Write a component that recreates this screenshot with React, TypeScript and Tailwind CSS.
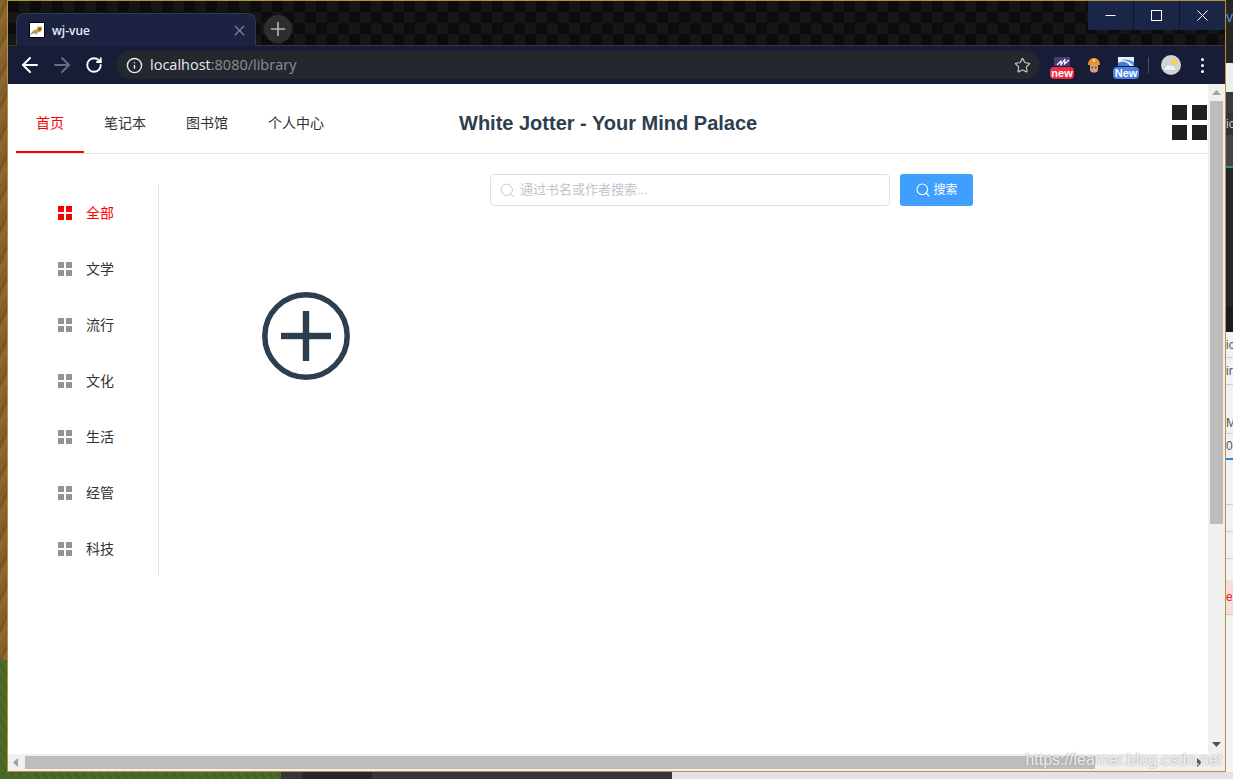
import React from "react";
import { ArrowLeft, ArrowRight, RotateCw, Info, Star, X, Plus, Search } from "lucide-react";

const cats = ["全部", "文学", "流行", "文化", "生活", "经管", "科技"];
const navs = ["首页", "笔记本", "图书馆", "个人中心"];

function Grid({ active }: { active: boolean }) {
  const c = active ? "bg-[#ff0000]" : "bg-[#909399]";
  return (
    <div className="grid grid-cols-[6px_6px] grid-rows-[6px_6px] gap-[2px]">
      <span className={c} />
      <span className={c} />
      <span className={c} />
      <span className={c} />
    </div>
  );
}

function Tomcat() {
  return (
    <svg width="16" height="16" viewBox="0 0 16 16" className="border border-black bg-white">
      <path d="M1 12 C3 8 6 7 8 7 L9 3 L10 4.5 L12 4.5 L13 3 L13.5 7.5 L12 10 L9 11 L5 11 Z" fill="#c79a3c" />
      <path d="M1 13 C3.5 10.5 6 10.5 8 13" stroke="#8a8a7a" strokeWidth="1.4" fill="none" />
      <path d="M9.5 5 L13 5 L13 7.5 L11 9 L9.5 7.5 Z" fill="#7d5f26" />
    </svg>
  );
}

function Mushroom() {
  return (
    <svg width="14" height="16" viewBox="0 0 14 16">
      <path d="M1 8 C1 3 4 1 7 1 C10 1 13 3 13 8 Z" fill="#e9932d" />
      <circle cx="7" cy="3.5" r="1.2" fill="#f7d9a8" />
      <path d="M3 8 H11 V13 C11 15 9 15.5 7 15.5 C5 15.5 3 15 3 13 Z" fill="#d9a07a" />
      <circle cx="5.2" cy="10.5" r="1.1" fill="#555" />
      <circle cx="8.8" cy="10.5" r="1.1" fill="#555" />
    </svg>
  );
}

function Weather() {
  return (
    <div className="flex h-5 w-5 items-center justify-center rounded-full bg-[#d3d3d3]">
      <svg width="16" height="14" viewBox="0 0 16 14">
        <circle cx="11" cy="4" r="3.2" fill="#f2d15c" />
        <path d="M2.5 12.5 C0 12.5 0 9 2.8 9 C3 6.5 7 5.5 8.5 8 C11 7.2 13 9 12.5 10.5 C14 11.5 13 12.5 12 12.5 Z" fill="#eaf3fa" stroke="#9dc2dc" strokeWidth="0.6" />
      </svg>
    </div>
  );
}

function PurpleExt() {
  return (
    <svg width="16" height="9" viewBox="0 0 16 9" className="bg-[#4a3a7c]">
      <path d="M3 8 L7 4 L7 8 L11 2 L10.5 7 L15 3" stroke="#ffffff" strokeWidth="1.2" fill="none" />
    </svg>
  );
}

function BlueExt() {
  return (
    <svg width="16" height="9" viewBox="0 0 16 9" className="bg-[#e8f0fb]">
      <path d="M0 6 C4 4 9 4 12 9 H0 Z" fill="#3f7fd8" />
      <path d="M3 3 C8 1.5 13 3 16 5 V9 H15 C13 5 8 3.5 3 3 Z" fill="#3f7fd8" opacity="0.8" />
    </svg>
  );
}

function Row({ h, text, red }: { h: string; text?: string; red?: boolean }) {
  return (
    <div className={h + " flex items-center overflow-hidden whitespace-nowrap border-b border-[#cccccc] text-xs " + (red ? "bg-[#f6dede] text-[#e02020]" : "text-[#555555]")}>
      {text}
    </div>
  );
}

export default function App() {
  return (
    <div className="relative flex h-[779px] w-[1233px] flex-col overflow-hidden bg-[#e6e6e6] [font-family:'Liberation_Sans','Noto_Sans_CJK_SC',sans-serif]">
      <div className="flex h-[772px]">
        {/* desktop, left */}
        <div className="flex h-full w-[7px] flex-col">
          <div className="h-[660px] bg-[repeating-linear-gradient(115deg,#84602a_0_5px,#795724_5px_8px,#8c6830_8px_13px)]" />
          <div className="flex-1 bg-[repeating-linear-gradient(60deg,#4c6b2a_0_4px,#466426_4px_7px)]" />
        </div>

        {/* browser window */}
        <div className="flex h-full w-[1219px] flex-col border border-[#bf8f35]">
          {/* tab strip */}
          <div className="flex h-[45px] items-end border-b border-[#35353a] bg-[#111111] bg-[repeating-conic-gradient(#161616_0_25%,#0c0c0c_0_50%)] bg-[length:22px_22px] pl-2">
            <div className="mb-[-1px] flex h-[33px] w-[240px] items-center rounded-t-lg border border-b-0 border-[#333848] bg-[#1b2242] pl-[12px] pr-[7px]">
              <Tomcat />
              <span className="ml-[7px] flex-1 pt-[1px] text-xs font-semibold text-[#e8ebf4] [font-family:'Open_Sans',sans-serif]">wj-vue</span>
              <X size={17} strokeWidth={1.8} className="text-[#84878f]" />
            </div>
            <div className="mb-[2px] ml-2 flex h-7 w-7 items-center justify-center rounded-full bg-[#2e2e2e]">
              <Plus size={22} strokeWidth={1.8} className="text-[#b4b4b4]" />
            </div>
            <div className="flex-1 self-stretch" />
            <div className="flex h-[29px] w-[137px] self-start bg-[#1a2647]">
              <div className="flex flex-1 items-center justify-center border-r border-[#0e1424]">
                <svg width="11" height="11" viewBox="0 0 11 11"><path d="M0.5 5.5 H10.5" stroke="#ffffff" strokeWidth="1" /></svg>
              </div>
              <div className="flex flex-1 items-center justify-center border-r border-[#0e1424]">
                <svg width="11" height="11" viewBox="0 0 11 11"><rect x="0.5" y="0.5" width="10" height="10" fill="none" stroke="#ffffff" strokeWidth="1" /></svg>
              </div>
              <div className="flex flex-1 items-center justify-center">
                <svg width="11" height="11" viewBox="0 0 11 11"><path d="M0.5 0.5 L10.5 10.5 M10.5 0.5 L0.5 10.5" stroke="#ffffff" strokeWidth="1" /></svg>
              </div>
            </div>
          </div>

          {/* toolbar */}
          <div className="flex h-[38px] items-center bg-[#171d36] pl-[10px] pr-[11px]">
            <ArrowLeft size={24} strokeWidth={2} className="text-white" />
            <ArrowRight size={24} strokeWidth={2} className="ml-[8px] text-[#686c7c]" />
            <RotateCw size={18} strokeWidth={2.4} className="ml-[11px] text-white" />
            <div className="ml-[13px] flex h-7 w-[924px] items-center rounded-full bg-[#23282e] pl-[10px] pr-[9px]">
              <Info size={17} strokeWidth={2} className="text-[#e6e6e6]" />
              <span className="ml-[7px] flex-1 text-[14.5px] text-[#e8eaed] [font-family:'Open_Sans',sans-serif]">
                localhost<span className="text-[#8c9095]">:8080/library</span>
              </span>
              <Star size={17} strokeWidth={1.7} className="text-[#bfc2c6]" />
            </div>
            <div className="ml-[10px] mt-[6px] flex w-[24px] flex-col items-center gap-[1px]">
              <PurpleExt />
              <div className="flex h-3 w-6 items-center justify-center rounded-sm bg-[#ee2d44] text-[11px] font-bold leading-none text-white">new</div>
            </div>
            <div className="ml-[13px] flex w-[14px] justify-center">
              <Mushroom />
            </div>
            <div className="ml-[12px] mt-[6px] flex w-[26px] flex-col items-center gap-[1px]">
              <BlueExt />
              <div className="flex h-3 w-[26px] items-center justify-center rounded-sm bg-[#4a80e8] text-[11px] font-bold leading-none text-white">New</div>
            </div>
            <div className="ml-[9px] h-4 w-px bg-[#4a4f60]" />
            <div className="ml-[12px]">
              <Weather />
            </div>
            <div className="ml-[20px] flex flex-col gap-[3px]">
              <span className="h-[3px] w-[3px] rounded-full bg-white" />
              <span className="h-[3px] w-[3px] rounded-full bg-white" />
              <span className="h-[3px] w-[3px] rounded-full bg-white" />
            </div>
          </div>

          {/* viewport */}
          <div className="flex min-h-0 flex-1 bg-white">
            <div className="flex min-w-0 flex-1 flex-col">
              <div className="min-h-0 flex-1">
                {/* nav */}
                <div className="ml-2 flex h-[70px] items-center border-b border-[#e6e6e6]">
                  {navs.map((n, i) => (
                    <div
                      key={n}
                      className={
                        i === 0
                          ? "flex h-[68px] items-center border-b-2 border-[#ff0000] px-5 pt-[10px] text-sm text-[#ff0000]"
                          : "flex h-[68px] items-center border-b-2 border-transparent px-5 pt-[10px] text-sm text-[#303133]"
                      }
                    >
                      {n}
                    </div>
                  ))}
                  <div className="ml-[115px] flex-1 pt-[9px] text-xl font-bold text-[#2c3e50]">White Jotter - Your Mind Palace</div>
                  <div className="mr-[1px] mt-[8px] grid grid-cols-[15px_15px] grid-rows-[15px_15px] gap-[5px]">
                    <span className="bg-[#1f1f1f]" />
                    <span className="bg-[#1f1f1f]" />
                    <span className="bg-[#1f1f1f]" />
                    <span className="bg-[#1f1f1f]" />
                  </div>
                </div>

                <div className="flex">
                  {/* sidebar */}
                  <div className="mt-[30px] h-[392px] w-[151px] border-r border-[#e6e6e6] pl-[50px]">
                    {cats.map((c, i) => (
                      <div key={c} className="flex h-14 items-center pt-[2px]">
                        <Grid active={i === 0} />
                        <span className={i === 0 ? "ml-[14px] text-[14px] text-[#ff0000]" : "ml-[14px] text-[14px] text-[#303133]"}>{c}</span>
                      </div>
                    ))}
                  </div>

                  {/* main */}
                  <div className="flex-1">
                    <div className="ml-[331px] mt-5 flex">
                      <div className="flex h-8 w-[400px] items-center rounded border border-[#dcdfe6] pl-[8px]">
                        <Search size={17} strokeWidth={1.3} className="text-[#c0c4cc]" />
                        <span className="ml-[4px] text-[13px] text-[#c0c4cc]">通过书名或作者搜索...</span>
                      </div>
                      <div className="ml-[10px] flex h-8 w-[73px] items-center justify-center gap-[2px] rounded-[3px] bg-[#409eff] text-xs text-white">
                        <Search size={16} strokeWidth={1.6} />
                        <span>搜索</span>
                      </div>
                    </div>
                    <svg width="90" height="90" viewBox="0 0 90 90" className="ml-[102px] mt-[85px]">
                      <circle cx="45" cy="45" r="41.2" fill="none" stroke="#2c3e50" strokeWidth="5.5" />
                      <rect x="20" y="41.8" width="50" height="6.4" fill="#2c3e50" />
                      <rect x="41.8" y="20" width="6.4" height="50" fill="#2c3e50" />
                    </svg>
                  </div>
                </div>
              </div>

              {/* horizontal scrollbar */}
              <div className="flex h-[17px] items-center bg-[#f0f0f0] pl-[5px]">
                <svg width="5" height="9" viewBox="0 0 5 9">
                  <path d="M5 0 V9 L0 4.5 Z" fill="#a3a3a3" />
                </svg>
                <div className="ml-[7px] h-[13px] w-[1070px] bg-[#bdbdbd]" />
                <div className="flex-1" />
                <svg width="5" height="9" viewBox="0 0 5 9" className="mr-[6px]">
                  <path d="M0 0 V9 L5 4.5 Z" fill="#505050" />
                </svg>
              </div>
            </div>

            {/* vertical scrollbar */}
            <div className="flex w-[17px] flex-col items-center bg-[#f0f0f0]">
              <svg width="9" height="5" viewBox="0 0 9 5" className="mt-[6px]">
                <path d="M4.5 0 L9 5 H0 Z" fill="#a3a3a3" />
              </svg>
              <div className="mt-[6px] h-[423px] w-[13px] bg-[#bdbdbd]" />
              <div className="flex-1" />
              <svg width="9" height="5" viewBox="0 0 9 5" className="mb-[24px]">
                <path d="M0 0 H9 L4.5 5 Z" fill="#505050" />
              </svg>
            </div>
          </div>
        </div>

        {/* desktop, right: the window behind */}
        <div className="flex h-full w-[7px] flex-col overflow-hidden bg-[#f2f2f2]">
          <div className="flex h-[63px] overflow-hidden whitespace-nowrap bg-[#262626] pt-[10px] text-sm leading-none text-[#5a9bd4]">vu</div>
          <div className="h-[29px] bg-[#eeeeee]" />
          <div className="h-[21px] bg-[#3a3a3a]" />
          <div className="flex h-[22px] items-center overflow-hidden whitespace-nowrap bg-[#333333] text-xs text-[#cccccc]">ic</div>
          <div className="h-[31px] bg-[#454545]" />
          <div className="h-[2px] bg-[#2e8a9a]" />
          <div className="h-[139px] bg-[#262626]" />
          <div className="h-[25px] bg-[#1c1c1c]" />
          <Row h="h-[26px]" text="ic" />
          <Row h="h-[27px]" text="ir" />
          <div className="flex h-[49px] items-end overflow-hidden whitespace-nowrap border-b border-[#cccccc] pb-[2px] text-xs text-[#555555]">M</div>
          <div className="flex h-[26px] items-center overflow-hidden whitespace-nowrap border-b-2 border-[#1e88d8] text-xs text-[#555555]">0C</div>
          <Row h="h-[45px]" />
          <Row h="h-[27px]" />
          <Row h="h-[27px]" />
          <div className="h-[21px]" />
          <Row h="h-[35px]" text="e" red />
        </div>
      </div>

      {/* desktop, bottom */}
      <div className="flex h-[7px]">
        <div className="w-[281px] bg-[repeating-linear-gradient(60deg,#4c6b2a_0_4px,#466426_4px_7px)]" />
        <div className="w-[21px] bg-[#35363a]" />
        <div className="w-[70px] bg-[#26272b]" />
        <div className="w-[300px] bg-[#35363a]" />
        <div className="flex-1 bg-[#e2e2e2]" />
      </div>

      {/* watermark */}
      <div className="absolute bottom-[9px] right-[11px] text-base leading-5 text-white/80 [text-shadow:0_0_2px_#8a8a8a]">https://learner.blog.csdn.net</div>
    </div>
  );
}
